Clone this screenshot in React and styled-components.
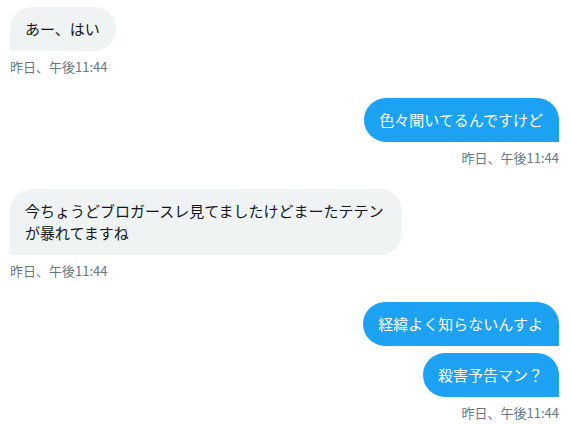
import React from 'react'
import styled, { createGlobalStyle } from 'styled-components'

const GlobalStyle = createGlobalStyle`
  body {
    margin: 0;
    background: #ffffff;
    font-family: "Noto Sans CJK JP", "Liberation Sans", sans-serif;
  }
`

const Thread = styled.div`
  display: flex;
  flex-direction: column;
  gap: 22px;
  padding: 7px 12px 0 10px;
`

const Group = styled.div`
  display: flex;
  flex-direction: column;
  align-items: ${p => (p.mine ? 'flex-end' : 'flex-start')};
  gap: 7px;
`

const Bubble = styled.div`
  box-sizing: border-box;
  max-width: 392px;
  padding: 11px 16px 11px 15px;
  font-size: 15px;
  line-height: 22px;
  color: ${p => (p.mine ? '#ffffff' : '#14171a')};
  background: ${p => (p.mine ? '#1da1f2' : '#eff3f4')};
  border-radius: ${p => (p.mine ? '22px 22px 0 22px' : '22px 22px 22px 0')};
  word-break: break-all;
`

const Stamp = styled.div`
  font-size: 13px;
  line-height: 18px;
  color: #657786;
`

const messages = [
  { mine: false, lines: ['あー、はい'] },
  { mine: true, lines: ['色々聞いてるんですけど'] },
  { mine: false, lines: ['今ちょうどブロガースレ見てましたけどまーたテテンが暴れてますね'] },
  { mine: true, lines: ['経緯よく知らないんすよ', '殺害予告マン？'] },
]

export default function App() {
  return (
    <>
      <GlobalStyle />
      <Thread>
        {messages.map((m, i) => (
          <Group key={i} mine={m.mine}>
            {m.lines.map((t, j) => (
              <Bubble key={j} mine={m.mine}>{t}</Bubble>
            ))}
            <Stamp>昨日、午後11:44</Stamp>
          </Group>
        ))}
      </Thread>
    </>
  )
}
